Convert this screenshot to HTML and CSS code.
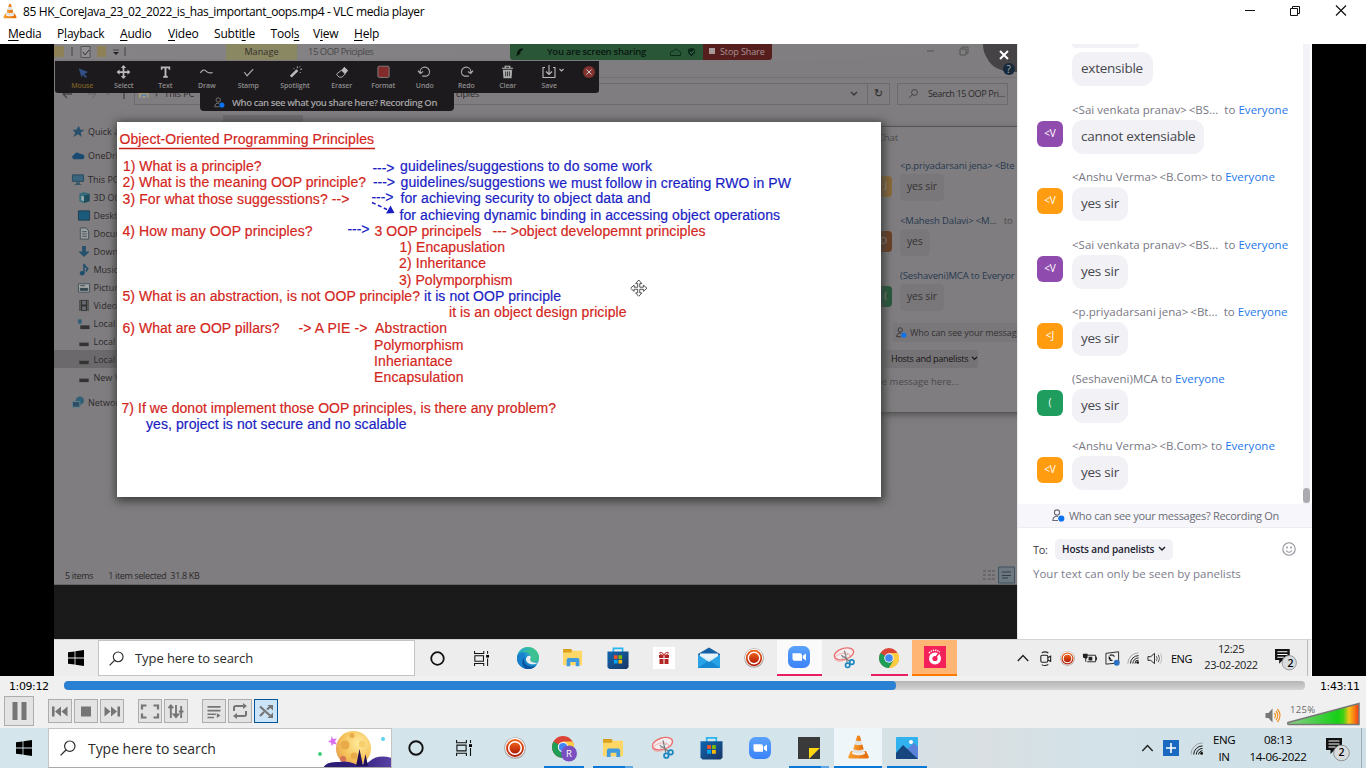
FILE: index.html
```html
<!DOCTYPE html>
<html lang="en">
<head>
<meta charset="utf-8">
<title>VLC media player</title>
<link rel="stylesheet" href="styles.css">
</head>
<body>
<svg class="defs" width="0" height="0" aria-hidden="true">
  <defs>
    <linearGradient id="gEdge" x1="0" y1="1" x2="1" y2="0"><stop offset="0" stop-color="#0b57a8"/><stop offset=".5" stop-color="#1b94d6"/><stop offset="1" stop-color="#5fd05a"/></linearGradient>
    <linearGradient id="gRec" x1="0" y1="0" x2="0" y2="1"><stop offset="0" stop-color="#f06018"/><stop offset="1" stop-color="#b01c08"/></linearGradient>
    <linearGradient id="gStore" x1="0" y1="0" x2="1" y2="1"><stop offset="0" stop-color="#0f66b0"/><stop offset="1" stop-color="#1a3666"/></linearGradient>
    <linearGradient id="gCone" x1="0" y1="0" x2="1" y2="0"><stop offset="0" stop-color="#f9a030"/><stop offset="1" stop-color="#e46a08"/></linearGradient>
    <linearGradient id="gZoom" x1="0" y1="0" x2="0" y2="1"><stop offset="0" stop-color="#5aa2fb"/><stop offset="1" stop-color="#3b82f8"/></linearGradient>
    <linearGradient id="gVol" x1="0" y1="0" x2="1" y2="0"><stop offset="0" stop-color="#8ccf8c"/><stop offset=".7" stop-color="#17cf17"/><stop offset=".78" stop-color="#3fd015"/><stop offset=".86" stop-color="#f5c518"/><stop offset="1" stop-color="#fa3a10"/></linearGradient>
    <radialGradient id="gMoon" cx=".65" cy=".35" r=".8"><stop offset="0" stop-color="#ffeb9c"/><stop offset=".6" stop-color="#f6c35a"/><stop offset="1" stop-color="#e2934a"/></radialGradient>
    <linearGradient id="gHill" x1="0" y1="0" x2="1" y2="0"><stop offset="0" stop-color="#2b1b72"/><stop offset=".5" stop-color="#32207c"/><stop offset="1" stop-color="#5a42a6"/></linearGradient>
  </defs>
  <symbol id="win" viewBox="0 0 16 16"><path d="M0 2.3 6.6 1.4V7.6H0zM7.4 1.3 16 0V7.6H7.4zM0 8.4H6.6V14.6L0 13.7zM7.4 8.4H16V16L7.4 14.7z"/></symbol>
  <symbol id="search" viewBox="0 0 16 16"><circle cx="9.8" cy="6.2" r="5.2" fill="none" stroke="currentColor" stroke-width="1.2"/><path d="M6.2 9.8.6 15.4" stroke="currentColor" stroke-width="1.3"/></symbol>
  <symbol id="cortana" viewBox="0 0 16 16"><circle cx="8" cy="8" r="6.7" fill="none" stroke="#111" stroke-width="1.9"/></symbol>
  <symbol id="task" viewBox="0 0 16 16"><g fill="none" stroke="#111" stroke-width="1.1"><path d="M.6 0v2.7h9.8V0M.6 16v-2.7h9.8V16M.9 5.1h9.2v5.8H.9zM14.5 0v3M14.5 8v8"/></g><rect x="13" y="4.2" width="3" height="2.8"/></symbol>
  <symbol id="edge" viewBox="0 0 22 22"><circle cx="11" cy="11" r="11" fill="url(#gEdge)"/><path d="M.1 9.500C2 6 5.500 5.600 8.500 7.200 5 9.500 5.200 14 7.500 17c2 2.500 5.500 3.800 9 3.500A11 11 0 0 1 .1 9.500z" fill="#177fcb"/><path d="M8.300 9.500C6 12 6.800 16 10 18.300c3 2 7 1.700 10-.8A11 11 0 0 1 9 21.800C4.500 19.500 4 12 8.300 9.500z" fill="#0c54a0"/><path d="M1 7C4 4 12.500 3.500 13.800 9.500c.3 1.500-.6 2.500-.9 3.300.9 2.500 5 2.500 7.600.9 2-1.500 1.700-4.500.5-7C18.500 1.500 12 -1.500 6.500 1.200 4 2.500 2 4.500 1 7z" fill="#3cc292"/><path d="M.8 7.500C3.500 2 10 0 14.500 2.500 10 2 5 3 .8 7.500z" fill="#27a8d6"/><path d="M10.500 9.200c-1.800 1.300-2.200 4-.3 6 2.600 2.700 7.500 2.700 11 .2-2.800.6-6.800.2-8-2.200-.6-1.400 1-1.900.6-3.200-.4-1.300-2-1.800-3.300-.8z" fill="#ededee"/></symbol>
  <symbol id="folder" viewBox="0 0 22 20"><path d="M0 1Q0 0 1 0h8l2 3v3H0z" fill="#d99a12"/><rect y="2" width="21" height="16" rx=".8" fill="#ffd766"/><path d="M0 2h10L9 4H0z" fill="#dba11d"/><path d="M4 19v-7.500l1.500-1.500h11l1.500 1.500V19h-4v-4.500H8V19z" fill="#3e9be0"/></symbol>
  <symbol id="store" viewBox="0 0 24 24"><path d="M7 6V1.500h10V6" fill="none" stroke="#29b6ee" stroke-width="1.800"/><path d="M.5 5h23v17l-2 2h-19l-2-2z" fill="url(#gStore)"/><path fill="#f35325" d="M7.500 9H11.500V13H7.500z"/><path fill="#81bc06" d="M12.500 9H16.500V13H12.500z"/><path fill="#05a6f0" d="M7.500 14H11.500V18H7.500z"/><path fill="#ffba08" d="M12.500 14H16.500V18H12.500z"/></symbol>
  <symbol id="rec" viewBox="0 0 22 22"><circle cx="11" cy="11" r="10.800" fill="#aaa4a0"/><circle cx="11" cy="10.700" r="9.900" fill="#fff"/><circle cx="11" cy="11" r="8" fill="none" stroke="url(#gRec)" stroke-width="1.900"/><circle cx="11" cy="11" r="5.500" fill="url(#gRec)"/></symbol>
  <symbol id="zoom" viewBox="0 0 22 22"><rect width="22" height="22" rx="6.500" fill="url(#gZoom)"/><path d="M4.500 7.200h7.500q2 0 2 2v5.600H6.500q-2 0-2-2zM14.800 9.700l3.200-2.200v7l-3.200-2.200z" fill="#fff"/></symbol>
  <symbol id="snip" viewBox="0 0 24 24"><ellipse cx="12" cy="7.500" rx="10.800" ry="6" transform="rotate(-17 12 7.500)" fill="#f4eef0" stroke="#ee7070" stroke-width="1.500"/><ellipse cx="10" cy="11" rx="8.500" ry="4" transform="rotate(-15 10 11)" fill="none" stroke="#f0a0a0" stroke-width=".8"/><path d="M12.500 4l3 13M9 9l10 7" stroke="#777" stroke-width="1.200"/><path d="M9.500 12.500l7-5" stroke="#aaa"/><circle cx="20.500" cy="16.500" r="2.400" fill="none" stroke="#1c86c0" stroke-width="1.800"/><circle cx="16" cy="20" r="2.400" fill="none" stroke="#1c86c0" stroke-width="1.800"/></symbol>
  <symbol id="chrome" viewBox="0 0 22 22"><circle cx="11" cy="11" r="11" fill="#db4437"/><path d="M11 11 1.500 5.500A11 11 0 0 0 11 22l4.800-8z" fill="#1e9e57"/><path d="M11 22A11 11 0 0 0 20.600 5.500H11l4.800 8.200z" fill="#ffcd40"/><circle cx="11" cy="11" r="5.200" fill="#f4f4f4"/><circle cx="11" cy="11" r="4.100" fill="#4285f4"/></symbol>
  <symbol id="cone" viewBox="0 0 22 24"><path d="M3.500 16h15l2.700 5.500q.5 2-1.200 2H2q-1.700 0-1.200-2z" fill="url(#gCone)"/><path d="M9.600 1q1.400-1 2.800 0l5.100 17.500q-6.500 3.500-13 0z" fill="#e0e0de"/><path d="M9.600 1q1.400-1 2.800 0l1.300 4.400q-2.700 1-5.400 0zM7.200 9.500q3.800 1.600 7.600 0l1.300 4.500q-5.100 2.400-10.200 0z" fill="url(#gCone)"/><path d="M5 16.800q6 3 12 0l.5 1.900q-6.500 3.200-13 0z" fill="#f4ede6"/></symbol>
  <symbol id="wifi" viewBox="0 0 14 14"><g fill="none" stroke="currentColor" stroke-width="1"><path d="M1 13.500A12.500 12.500 0 0 1 13.500 1" stroke="#999"/><path d="M4 13.500A9.500 9.500 0 0 1 13.500 4.200M6.800 13.500a6.700 6.700 0 0 1 6.700-6.600M9.300 13.500a4 4 0 0 1 4.200-4"/></g><circle cx="12.500" cy="12.300" r="1.500"/></symbol>
  <symbol id="note" viewBox="0 0 25 24"><path d="M0 0h16v12H8.500L4.500 16V12H0z" fill="#111"/><path d="M2.500 3h11M2.500 6h11M2.500 9h7" stroke="#fff" stroke-width="1.200"/><circle cx="15.500" cy="15" r="7.800" fill="#d8dcde" stroke="#8e9294"/></symbol>
  <symbol id="up" viewBox="0 0 12 8"><path d="M.8 7 6 1.600 11.200 7" fill="none" stroke="#222" stroke-width="1.400"/></symbol>
  <symbol id="person" viewBox="0 0 13 13"><g fill="none" stroke="currentColor" stroke-width="1.100"><circle cx="5" cy="3.500" r="2.600"/><path d="M6 11.500H.8C1 8 3 7 6 7.400"/></g><circle cx="9.300" cy="9.500" r="3.100" class="badge"/></symbol>
  <symbol id="move" viewBox="0 0 16 16"><path d="M8 0l3 3.500H9V7h3.500V5L16 8l-3.500 3V9H9v3.500h2L8 16l-3-3.500h2V9H3.500v2L0 8l3.500-3v2H7V3.500H5z"/></symbol>
  <symbol id="down" viewBox="0 0 8 6"><path d="M1 1l3 3 3-3" fill="none" stroke="currentColor" stroke-width="1.500"/></symbol>
</svg>

<header class="titlebar">
  <svg class="app-icon"><use href="#cone"/></svg>
  <span class="title">85 HK_CoreJava_23_02_2022_is_has_important_oops.mp4 - VLC media player</span>
  <svg class="win-buttons" viewBox="0 0 104 14"><g fill="none" stroke="#111"><path d="M1 7.500h10M46.500 5.500h7v7h-7zM48.500 5.500v-2h7v7h-2"/><path d="M92 2.500l10 10M102 2.500l-10 10" stroke-width="1.200"/></g></svg>
</header>
<nav class="menubar">
  <span><u>M</u>edia</span><span>P<u>l</u>ayback</span><span><u>A</u>udio</span><span><u>V</u>ideo</span><span>Subti<u>t</u>le</span><span>Tool<u>s</u></span><span>V<u>i</u>ew</span><span><u>H</u>elp</span>
</nav>

<main class="video">
  <div class="frame">
    <section class="share">
      <div class="explorer">
        <div class="ex-title">
          <svg class="quick" viewBox="0 0 76 16"><path d="M0 2h10v11H0zM43 2h9v11h-9z" fill="#8e8057"/><path d="M18 3v9M71 3v9M59 6h6" stroke="#444" stroke-width="1"/><path d="M27 2.500h9v11h-9z" fill="#929092" stroke="#555"/><path d="M29 8l2 3 4-5" fill="none" stroke="#333"/><path d="M59 8h6l-3 3z" fill="#222"/></svg>
          <span class="manage">Manage</span><span class="folder-name">15 OOP Priciples</span>
          <svg class="ex-buttons" viewBox="0 0 88 16"><path d="M-2 7h7M31 5h6v6h-6zM33 5V3h6v6h-2M70 4l8 7M78 4l-8 7" fill="none" stroke="#555"/></svg>
        </div>
        <div class="ribbon"></div>
        <div class="address">
          <svg class="arrows" viewBox="0 0 78 16"><path d="M18 8h-8M13 4L9 8l4 4M70 13V3M66 7l4-4 4 4" fill="none" stroke="#444" stroke-width="1.300"/><path d="M34 8h8M38 4l4 4-4 4M52 7l2 2 2-2" fill="none" stroke="#696769"/></svg>
          <div class="path"><svg class="mini-folder"><use href="#folder"/></svg><span class="pc">&#8250;&nbsp;&nbsp; This PC</span><span class="ciples">ciples</span><svg class="dd"><use href="#down"/></svg><span class="reload">&#8635;</span></div>
          <div class="find"><svg><use href="#search"/></svg><span>Search 15 OOP Pri...</span></div>
        </div>
        <div class="side">
          <div class="item top"><svg viewBox="0 0 14 14"><path d="M8 1l1.500 4L14 5l-4 3 1 5-4-3-5 3 2-5-3-3h4z" fill="#28506b"/></svg>Quick access</div>
          <div class="item top"><svg viewBox="0 0 14 14"><path d="M2 11q-3-3 1-5Q5 2 9 5q5 0 5 4 0 2-3 2z" fill="#194b72"/></svg>OneDrive</div>
          <div class="item top this-pc"><svg viewBox="0 0 14 14"><path d="M1 2h12v7H1z" fill="#39667e" stroke="#28485b"/><path d="M5 10h4v2h2v1H3v-1h2z" fill="#35576a"/></svg>This PC</div>
          <div class="item"><svg viewBox="0 0 14 14"><path d="M2 3l5-2 6 2v8l-6 2-5-2z" fill="#346c7a"/><path d="M7 5l6-2v8l-6 2z" fill="#204d5c"/><path d="M4 5l3 1v5l-3-1z" fill="#93a9ab"/></svg>3D Objects</div>
          <div class="item"><svg viewBox="0 0 14 14"><path d="M1 2h12v10H1z" fill="#195a7d" stroke="#243e50"/></svg>Desktop</div>
          <div class="item"><svg viewBox="0 0 14 14"><path d="M3 1h6l3 3v9H3zM5 5h5M5 7.500h5M5 10h5" fill="#9a9c9d" stroke="#42515a"/></svg>Documents</div>
          <div class="item"><svg viewBox="0 0 14 14"><path d="M5 1h4v6h4l-6 6-6-6h4z" fill="#26516c"/></svg>Downloads</div>
          <div class="item"><svg viewBox="0 0 14 14"><circle cx="5" cy="11" r="2.500" fill="#1e4d6b"/><path d="M7 11V1q1 3 4 5-1 2-2 3" fill="none" stroke="#1e4d6b" stroke-width="1.600"/></svg>Music</div>
          <div class="item"><svg viewBox="0 0 14 14"><path d="M1 3h12v9H1z" fill="#a2a4a5" stroke="#43515a"/><path d="M3 5h5M3 8h8v2H3z" stroke="#33444f" fill="#33444f"/></svg>Pictures</div>
          <div class="item"><svg viewBox="0 0 14 14"><path d="M2 1h10v12H2z" fill="#333"/><path d="M5 2h4v4H5zM5 8h4v4H5z" fill="#686c73"/><path d="M3 2v11M11 2v11" stroke="#999" stroke-dasharray="1 1"/></svg>Videos</div>
          <div class="item"><svg viewBox="0 0 14 14"><path d="M3 9h10v4H3z" fill="#333"/><path d="M1 3h3v3H1zM1 7h3" stroke="#315c78" fill="#315c78"/></svg>Local Disk</div>
          <div class="item"><svg viewBox="0 0 14 14"><path d="M2 8h10v4H2z" fill="#333"/><path d="M3 8h8" stroke="#666"/></svg>Local Disk</div>
          <div class="item selected"><svg viewBox="0 0 14 14"><path d="M2 8h10v4H2z" fill="#333"/><path d="M3 8h8" stroke="#666"/></svg>Local Disk</div>
          <div class="item"><svg viewBox="0 0 14 14"><path d="M2 8h10v4H2z" fill="#333"/><path d="M3 8h8" stroke="#666"/></svg>New Volume</div>
          <div class="item top net"><svg viewBox="0 0 14 14"><circle cx="9" cy="5" r="4.500" fill="#316075"/><path d="M1 6h8v6H1z" fill="#2d4e62" stroke="#617f8c"/></svg>Network</div>
        </div>
        <div class="ex-status"><span>5 items</span><span>1 item selected&nbsp; 31.8 KB</span>
          <svg class="views" viewBox="0 0 34 18"><path d="M1 5h3M1 9h3M1 13h3M6 5h7M6 9h7M6 13h7" stroke="#555" stroke-dasharray="3 1"/><path d="M16.500 1h16v16h-16z" fill="#6d7780" stroke="#3d5260"/><path d="M20 6h9M20 9.500h9M20 12h6" stroke="#303e4a"/></svg>
        </div>
      </div>

      <div class="close-corner"><svg viewBox="0 0 34 31"><path d="M0 0h34v28Q10 28 4 14 0 8 0 0z" fill="#454345"/><circle cx="26" cy="25" r="6" fill="#17293a"/><text x="23.500" y="29" font-size="10" fill="#a3a9b0">?</text><path d="M17 7l8 8M25 7l-8 8" stroke="#fff" stroke-width="2"/></svg></div>

      <div class="selected-tab"></div>
      <aside class="ghost-chat">
        <div class="g-title">Chat</div>
        <div class="g-name">&lt;p.priyadarsani jena&gt; &lt;Bte</div>
        <div class="g-row"><i class="av tan">J</i><b>yes sir</b></div>
        <div class="g-name">&lt;Mahesh Dalavi&gt; &lt;M... <em>to</em></div>
        <div class="g-row"><i class="av brown">D</i><b>yes</b></div>
        <div class="g-name">(Seshaveni)MCA to Everyor</div>
        <div class="g-row"><i class="av dgreen">(</i><b>yes sir</b></div>
        <div class="g-who"><svg><use href="#person"/></svg>Who can see your message</div>
        <div class="g-to"><span>Hosts and panelists <svg><use href="#down"/></svg></span></div>
        <div class="g-type">pe message here...</div>
      </aside>

      <svg class="board" viewBox="117 122 764 374.500">
        <g class="red">
          <text x="119.500" y="143.500" textLength="254.500">Object-Oriented Programming Principles</text>
          <path d="M119 148.500H375" stroke="#c8201c" stroke-width="1.500"/>
          <text x="123" y="171" textLength="138.500">1) What is a principle?</text>
          <text x="122.500" y="187.300" textLength="243.500">2) What is the meaning OOP principle?</text>
          <text x="122.500" y="203.500" textLength="227">3) For what those suggesstions? --&gt;</text>
          <text x="122.500" y="235.500" textLength="190">4) How many OOP principles?</text>
          <text x="374.500" y="235.700" textLength="107">3 OOP principels</text>
          <text x="492.500" y="235.700" textLength="213">--- &gt;object developemnt principles</text>
          <text x="399.500" y="252" textLength="105.500">1) Encapuslation</text>
          <text x="399" y="268.300" textLength="87">2) Inheritance</text>
          <text x="399" y="284.500" textLength="113.500">3) Polymporphism</text>
          <text x="122.500" y="300.800" textLength="297.500">5) What is an abstraction, is not OOP principle?</text>
          <text x="449" y="317" textLength="177.500">it is an object design priciple</text>
          <text x="122.500" y="333" textLength="157">6) What are OOP pillars?</text>
          <text x="298.500" y="333" textLength="69">-&gt; A PIE -&gt;</text>
          <text x="375" y="333" textLength="72">Abstraction</text>
          <text x="374" y="349.500" textLength="89.500">Polymorphism</text>
          <text x="374" y="365.500" textLength="78.500">Inheriantace</text>
          <text x="374" y="381.800" textLength="89.500">Encapsulation</text>
          <text x="121.500" y="412.800" textLength="434.500">7) If we donot implement those OOP principles, is there any problem?</text>
        </g>
        <g class="blue">
          <text x="372.500" y="172.500" textLength="22">---&gt;</text>
          <text x="400" y="171" textLength="252">guidelines/suggestions to do some work</text>
          <text x="373" y="186.500" textLength="22">---&gt;</text>
          <text x="400.500" y="186.800" textLength="144.500">guidelines/suggestions</text>
          <text x="549" y="187.500" textLength="242">we must follow in creating RWO in PW</text>
          <text x="371.500" y="201.500" textLength="22">---&gt;</text>
          <text x="400.500" y="203.300" textLength="250">for achieving security to object data and</text>
          <path d="M372 202.500l15 7" stroke="#1a1ec4" stroke-width="1.500" stroke-dasharray="4 2.500"/><path d="M386 213.500l8.500-.5-4-7.500z" fill="#1a1ec4" stroke="none"/>
          <text x="399.500" y="219.500" textLength="380.500">for achieving dynamic binding in accessing object operations</text>
          <text x="347.500" y="234" textLength="22">---&gt;</text>
          <text x="424" y="300.800" textLength="137">it is not OOP principle</text>
          <text x="146" y="429" textLength="260.500">yes, project is not secure and no scalable</text>
        </g>
        <svg x="630" y="279.500" width="16.500" height="16.500" viewBox="-.5 -.5 17 17" fill="#fff" stroke="#444" stroke-width=".9"><use href="#move"/></svg>
      </svg>

      <div class="sharing"><svg class="pen" viewBox="0 0 8 9"><path d="M8 0Q1 1 1 7l-1 2 3-1q3-2 2-4l2-1z"/></svg><span>You are screen sharing</span><svg class="cloud" viewBox="0 0 26 10"><path d="M1.500 8.500q-1-4 2.500-4.500 3-4 5.500 0 3 0 2 4.500z" fill="none" stroke="#0b2b18"/><path d="M22.500 1l3.500 1v4l-3.500 3.500L19 6V2z" fill="#0b2b18"/><path d="M21 5l1.500 1.500L25 3.500" fill="none" stroke="#4a8160"/></svg></div>
      <div class="stop"><i></i>Stop Share</div>
      <div class="who-bar"><svg><use href="#person"/></svg><span>Who can see what you share here? Recording On</span></div>
      <div class="tools">
        <div class="tool mouse"><svg viewBox="0 0 16 14"><path d="M4 3l10 4-4 2 3 3-2 1-3-3-1 3z" fill="#314f86"/></svg>Mouse</div>
        <div class="tool"><svg viewBox="0 0 16 16"><use href="#move" fill="#bbb"/></svg>Select</div>
        <div class="tool"><svg viewBox="0 0 16 14"><path d="M3 1h10v3.500h-1.500L11 3H9v8l1.500.5V13h-5v-1.500L7 11V3H5l-.5 1.500H3z" fill="#bbb"/></svg>Text</div>
        <div class="tool"><svg viewBox="0 0 16 14"><path d="M1.500 8q3-5 6-2t7 1.500" fill="none" stroke="#aaa" stroke-width="1.300"/></svg>Draw</div>
        <div class="tool"><svg viewBox="0 0 16 14"><path d="M3.500 7l3 4L13 4" fill="none" stroke="#aaa" stroke-width="1.300"/></svg>Stamp</div>
        <div class="tool spot"><svg viewBox="0 0 16 14"><path d="M3 12l7-7" stroke="#bbb" stroke-width="2.800"/><path d="M10 1v2M13 4h2M12.500 7l1 1M6 3l1 1M13 1l-1 1" stroke="#bbb"/></svg>Spotlight</div>
        <div class="tool"><svg viewBox="0 0 16 14"><path d="M3 9l5-4 4 4-3.500 3.500H5.500L3 10z" fill="none" stroke="#bbb"/><path d="M8 5l3-3.500 4 4L12 9z" fill="#bbb"/></svg>Eraser</div>
        <div class="tool"><svg viewBox="0 0 16 14"><rect x="2" y=".8" width="12" height="12" rx="1.500" fill="#812c2b" stroke="#82807f"/></svg>Format</div>
        <div class="tool"><svg viewBox="0 0 16 14"><path d="M5.500 11.500H10A5 5 0 1 0 3.500 8M1 5.500l2.500 3 3-2" fill="none" stroke="#aaa" stroke-width="1.300"/></svg>Undo</div>
        <div class="tool"><svg viewBox="0 0 16 14"><path d="M10.500 11.500H6A5 5 0 1 1 12.500 8M15 5.500l-2.500 3-3-2" fill="none" stroke="#aaa" stroke-width="1.300"/></svg>Redo</div>
        <div class="tool"><svg viewBox="0 0 16 14"><path d="M2 3h12M5.500 3V.8h5V3" fill="none" stroke="#bbb" stroke-width="1.200"/><path d="M3 4.500h10l-.7 9.200H3.700z" fill="#aaa"/><path d="M6 6.500v5M8 6.500v5M10 6.500v5" stroke="#333"/></svg>Clear</div>
        <div class="tool"><svg class="save" viewBox="0 0 24 14"><path d="M8 2.500H6v10h12v-10h-2M12 0v9M9 6.500l3 3 3-3M22.500 4l2 2 2-2" fill="none" stroke="#bbb" stroke-width="1.100"/></svg>Save</div>
        <svg class="tool-close" viewBox="0 0 12 12"><circle cx="6" cy="6" r="6" fill="#823330"/><path d="M3.500 3.500l5 5M8.500 3.500l-5 5" stroke="#ccc"/></svg>
      </div>
    </section>

    <section class="chat">
      <div class="messages">
        <div class="cut"></div>
        <div class="bubble first">extensible</div>
        <div class="msg"><p>&lt;Sai venkata pranav&gt;&thinsp;&lt;BS...&nbsp; to <a>Everyone</a></p><div class="line"><i class="purple">&lt;V</i><div class="bubble">cannot extensiable</div></div></div>
        <div class="msg anshu"><p>&lt;Anshu Verma&gt;&thinsp;&lt;B.Com&gt; to <a>Everyone</a></p><div class="line"><i>&lt;V</i><div class="bubble">yes sir</div></div></div>
        <div class="msg"><p>&lt;Sai venkata pranav&gt;&thinsp;&lt;BS...&nbsp; to <a>Everyone</a></p><div class="line"><i class="purple">&lt;V</i><div class="bubble">yes sir</div></div></div>
        <div class="msg priya"><p>&lt;p.priyadarsani jena&gt;&thinsp;&lt;Bt...&nbsp; to <a>Everyone</a></p><div class="line"><i>&lt;J</i><div class="bubble">yes sir</div></div></div>
        <div class="msg sesha"><p>(Seshaveni)MCA to <a>Everyone</a></p><div class="line"><i class="green">(</i><div class="bubble">yes sir</div></div></div>
        <div class="msg anshu"><p>&lt;Anshu Verma&gt;&thinsp;&lt;B.Com&gt; to <a>Everyone</a></p><div class="line"><i>&lt;V</i><div class="bubble">yes sir</div></div></div>
        <div class="scroll"><div class="thumb"></div></div>
      </div>
      <div class="who"><svg><use href="#person"/></svg><span>Who can see your messages? Recording On</span></div>
      <div class="to"><span class="to-label">To:</span><span class="pill">Hosts and panelists<svg><use href="#down"/></svg></span>
        <svg class="smile" viewBox="0 0 14 14"><g fill="none" stroke="#8e8e98" stroke-width="1.100"><circle cx="7" cy="7" r="6.200"/><path d="M4 8.500q3 3.500 6 0"/></g><circle cx="5" cy="5.500" r=".9" fill="#8e8e98"/><circle cx="9" cy="5.500" r=".9" fill="#8e8e98"/></svg></div>
      <div class="hint">Your text can only be seen by panelists</div>
    </section>
  </div>

  <div class="taskbar inner">
    <div class="start"><svg><use href="#win"/></svg></div>
    <div class="searchbox"><svg><use href="#search"/></svg><span>Type here to search</span></div>
    <div class="slot"><svg class="s15"><use href="#cortana"/></svg></div>
    <div class="slot tv"><svg class="s15"><use href="#task"/></svg></div>
    <div class="slot"><svg class="s22"><use href="#edge"/></svg></div>
    <div class="slot"><svg class="s20"><use href="#folder"/></svg></div>
    <div class="slot"><svg class="s22"><use href="#store"/></svg></div>
    <div class="slot"><svg class="s22" viewBox="0 0 22 22"><path d="M0 0h22v22H0z" fill="#fff"/><path d="M6 8h4.500v3H6zM11.500 8H16v3h-4.500zM6.500 12h4v5h-4zM11.500 12h4v5h-4z" fill="#b02522"/><path d="M11 8Q6 8 7 5.500q2-1 4 2.500 2-3.500 4-2.500Q16 8 11 8z" fill="none" stroke="#c44" stroke-width="1.100"/></svg></div>
    <div class="slot"><svg class="s22" viewBox="0 0 22 22"><path d="M0 7L11 .5 22 7v3H0z" fill="#1660a6"/><path d="M2 6.500h18V12l-9 5-9-5z" fill="#e8f3fa"/><path d="M0 7.500L11 15 22 7.500V21H0z" fill="#28a3e6"/><path d="M0 21l11-8 11 8z" fill="#1688d2"/><path d="M0 7.500L11 15 22 7.500 11 13z" fill="#cfe6f5"/></svg></div>
    <div class="slot"><svg class="s20"><use href="#rec"/></svg></div>
    <div class="slot active"><svg class="s22"><use href="#zoom"/></svg></div>
    <div class="slot"><svg class="s22"><use href="#snip"/></svg></div>
    <div class="slot running"><svg class="s20"><use href="#chrome"/></svg></div>
    <div class="slot orange"><svg class="s22" viewBox="0 0 22 22"><path d="M0 0h22v22H0z" fill="#f5205a"/><circle cx="11" cy="12.500" r="6" fill="#fff"/><circle cx="11" cy="12.500" r="2.600" fill="#f5205a"/><path d="M11 12.500l3.500-5" stroke="#f5205a" stroke-width="1.500"/><path d="M5 7Q10 2 16 6" fill="none" stroke="#fff" stroke-width="1.600" stroke-dasharray="1.300 1"/></svg></div>
    <div class="tray">
      <svg class="up"><use href="#up"/></svg>
      <svg viewBox="0 0 16 16"><g fill="none" stroke="#222" stroke-width="1.200"><rect x="3" y="4.500" width="7.500" height="7.500" rx="1.500"/><path d="M10.500 7l3-1.500v5.500l-3-1.500M4 2q3-2 7 0M4 14.500q3 2 7 0"/></g></svg>
      <svg viewBox="0 0 22 22"><use href="#rec"/></svg>
      <svg viewBox="0 0 16 16"><path d="M5.500 4.500h9v7h-9M14.500 6.500h1v3h-1" fill="none" stroke="#222"/><path d="M7 6h4v4H7zM1 3h5v4l-1.500 1.500v3h-1V8L1 7z" fill="#222"/></svg>
      <svg viewBox="0 0 16 16"><path d="M1 2.500L14.500.8v12L1 14z" fill="none" stroke="#222"/><path d="M5 5q3-2 5 1M5 10h3" fill="none" stroke="#222" stroke-width="1.300"/><path d="M4 5v4h3z"/><circle cx="12.500" cy="12.500" r="3.200" fill="#2b72c4"/></svg>
      <svg class="wf"><use href="#wifi"/></svg>
      <svg viewBox="0 0 16 16"><path d="M1 6h3l4-3.500v11L4 10H1z" fill="none" stroke="#222"/><path d="M10 5.500q1.500 2.500 0 5M12 4q2.500 4 0 8" fill="none" stroke="#555"/><path d="M14 2.500q3.500 5 0 11" fill="none" stroke="#bbb"/></svg>
      <span class="lang">ENG</span>
      <span class="clock">12:25<br>23-02-2022</span>
      <span class="noti"><svg><use href="#note"/></svg><b>2</b></span>
    </div>
  </div>
</main>

<section class="player">
  <div class="seek"><span class="time">1:09:12</span><div class="track"><div class="fill"></div></div><span class="time">1:43:11</span></div>
  <div class="controls">
    <button class="big"><svg viewBox="0 0 16 18"><path d="M1 0h5v18H1zM10 0h5v18h-5z"/></svg></button>
    <div class="group">
      <button><svg viewBox="0 0 16 12"><path d="M0 1h2.500v10H0zM9 1v10L3 6zM15.500 1v10L9.500 6z"/></svg></button>
      <button><svg viewBox="0 0 16 12"><path d="M3 1h10v10H3z"/></svg></button>
      <button><svg viewBox="0 0 16 12"><path d="M13.500 1H16v10h-2.500zM.5 1l6 5-6 5zM7 1l6 5-6 5z"/></svg></button>
    </div>
    <div class="group">
      <button><svg viewBox="0 0 18 14" class="w18"><path d="M1 5V1h4.500M12.500 1H17v4M17 9v4h-4.500M5.500 13H1V9" fill="none" stroke="#757575" stroke-width="2.200"/></svg></button>
      <button><svg viewBox="0 0 18 16" class="w18"><path d="M3.500 2v13M9 1v13M14.500 2v13M1 4.500l2.500-3 2.500 3M6.500 11h5L9 14zM12 8h5" fill="none" stroke="#757575" stroke-width="2"/></svg></button>
    </div>
    <div class="group">
      <button><svg viewBox="0 0 16 14"><path d="M1 2h14M1 6h14M1 10h9M1 13.500h7" stroke="#757575" stroke-width="1.800"/><path d="M11 8.500v5.500l4-2.700z"/></svg></button>
      <button><svg viewBox="0 0 16 16" class="w16"><path d="M2 8V4.500Q2 3 4 3h8M14 8v3.500q0 1.500-2 1.500H4" fill="none" stroke="#757575" stroke-width="2"/><path d="M11 0l4 3-4 3zM5 10l-4 3 4 3z"/></svg></button>
      <button class="on"><svg viewBox="0 0 16 16" class="w16"><path d="M2 3.500l10 9M2 13l4-4M9 6.500l3.500-3" fill="none" stroke="#757575" stroke-width="2.200"/><path d="M9.500 2H15v5.500zM9.500 15H15V9.500z"/></svg></button>
    </div>
    <svg class="volume" viewBox="0 0 98 28">
      <path d="M3.500 12h3l4-4.500v14l-4-4.500h-3z" fill="#777"/><path d="M12.500 12q2 2.500 0 5M14 10q3.500 4.500 0 9M15.500 8q5 6.500 0 13" fill="none" stroke="#f0962a" stroke-width="1.300"/>
      <path d="M26 21.500 97 2.500v21H27q-2 0-1-2z" fill="url(#gVol)" stroke="#777" stroke-width="1.500"/><text x="28" y="11.500" textLength="25">125%</text>
    </svg>
  </div>
</section>

<footer class="taskbar outer">
  <div class="start"><svg><use href="#win"/></svg></div>
  <div class="searchbox"><svg class="mag"><use href="#search"/></svg><span>Type here to search</span>
    <svg class="moon" viewBox="0 0 76 40"><circle cx="37.500" cy="20.500" r="17.500" fill="url(#gMoon)"/><g fill="#e9aa49"><circle cx="29" cy="17" r="4.500"/><circle cx="46" cy="16" r="3.200" fill="#f6ce6b"/><circle cx="36" cy="7.500" r="2.500"/><circle cx="38" cy="28" r="3.500"/><circle cx="27" cy="31" r="3" fill="#d57554"/></g><path d="M15.500 8l1.700 3 3.800-.8-2 3 2 3.300-3.300-.8-2 2.200-.7-3.100-3-1.300 3-1.600z" fill="#da72ef"/><circle cx="4" cy="26" r="1.900" fill="#3ecb77"/><circle cx="67" cy="11" r="2" fill="#5bd5ee"/><path d="M7 40q4-7 16-6 10-2 18 3 7 1 13-4 8-7 22-3v10z" fill="url(#gHill)"/><path d="M43.500 21l3.500 17h-7zM49.500 26l2.500 12h-5z" fill="#211059"/></svg></div>
  <div class="slot"><svg class="s16"><use href="#cortana"/></svg></div>
  <div class="slot"><svg class="s16"><use href="#task"/></svg></div>
  <div class="apps">
    <div class="slot"><svg class="s22"><use href="#rec"/></svg></div>
    <div class="slot running"><svg class="s25" viewBox="0 0 25 25"><use href="#chrome" width="22" height="22"/><circle cx="17" cy="17.500" r="8" fill="#7a4fc0"/><text x="14" y="21" font-size="9.500" fill="#fff">R</text></svg></div>
    <div class="slot running double"><svg class="s21"><use href="#folder"/></svg></div>
    <div class="slot"><svg class="s23"><use href="#snip"/></svg></div>
    <div class="slot"><svg class="s23"><use href="#store"/></svg></div>
    <div class="slot"><svg class="s22"><use href="#zoom"/></svg></div>
    <div class="slot running double"><svg class="s22" viewBox="0 0 22 22"><path d="M0 0h22v11L11 22H0z" fill="#3a3a3a"/><path d="M11 22V11h11z" fill="#ffd80f"/><path d="M11 22L22 11v11z" fill="#3a3a3a"/></svg></div>
    <div class="slot active"><svg class="s23"><use href="#cone"/></svg></div>
    <div class="slot running"><svg class="s22" viewBox="0 0 22 22"><rect width="22" height="22" rx="1" fill="#31b2ee"/><path d="M10 13l8-7 4 4v12H10z" fill="#5a82d8"/><path d="M0 16l7-8 15 14H0z" fill="#16457f"/><circle cx="15" cy="5" r="2" fill="#fff"/></svg></div>
  </div>
  <div class="tray">
    <svg class="up"><use href="#up"/></svg>
    <svg class="plus" viewBox="0 0 16 16"><path d="M0 0h16v16H0z" fill="#1b68c0"/><path d="M8 3v10M3 8h10" stroke="#fff" stroke-width="1.600"/></svg>
    <svg class="wf"><use href="#wifi"/></svg>
    <span class="lang">ENG<br>IN</span>
    <span class="clock">08:13<br>14-06-2022</span>
    <span class="noti"><svg><use href="#note"/></svg><b>2</b></span>
  </div>
</footer>
</body>
</html>
```
FILE: styles.css
```css
* { box-sizing: border-box; }
body { margin: 0; width: 1366px; height: 768px; overflow: hidden; display: flex; flex-direction: column; background: #fff; font-family: "Open Sans", "Noto Sans", sans-serif; font-size: 12px; color: #000; white-space: nowrap; }
svg { display: block; flex: none; overflow: visible; }
.defs { position: absolute; }
i, em, b { font-style: normal; font-weight: normal; }

.titlebar { height: 24px; flex: none; display: flex; align-items: center; padding: 0 18px 2px 3px; }
.app-icon { width: 14px; height: 16px; }
.title { margin-left: 6px; letter-spacing: -0.36px; }
.win-buttons { width: 104px; height: 14px; margin-left: auto; margin-top: -3px; }
.menubar { height: 20px; flex: none; display: grid; grid-template-columns: 49px 63px 48px 46px 56.5px 42.5px 41px 40px; padding-left: 8px; line-height: 19px; letter-spacing: -0.2px; }
.menubar u { text-underline-offset: 2px; }

.video { height: 632px; flex: none; background: #000; padding: 0 54px; display: flex; flex-direction: column; }
.frame { height: 595px; display: flex; }
.share { width: 963px; height: 595px; flex: none; position: relative; overflow: hidden; background: #1a1a1a; }
.explorer { height: 541px; background: #7f7d7f; display: flex; flex-direction: column; color: #2b292b; font-size: 9px; letter-spacing: -0.1px; border-bottom: 1px solid #666; }
.ex-title { height: 15px; flex: none; display: flex; align-items: center; color: #4b494b; background: linear-gradient(90deg, #858385, #7f7d7f); }
.quick { width: 76px; height: 16px; }
.manage { width: 71px; height: 16px; margin-left: 96px; background: #8a8763; text-align: center; line-height: 15px; color: #33312a; letter-spacing: .1px; }
.folder-name { margin-left: 11px; font-size: 9.500px; letter-spacing: -0.500px; }
.ex-buttons { width: 88px; height: 16px; margin-left: auto; }
.ribbon { height: 19px; flex: none; border-bottom: 1px solid #737173; }
.address { height: 31px; flex: none; display: flex; align-items: center; }
.arrows { width: 78px; height: 16px; }
.path { width: 756px; height: 22px; margin-left: 2px; border: 1px solid #6c6a6c; display: flex; align-items: center; padding-left: 4px; }
.mini-folder { width: 10px; height: 10px; opacity: .35; }
.pc { margin-left: 6px; }
.ciples { margin-left: 262px; }
.dd { width: 8px; height: 6px; margin-left: auto; color: #3b393b; }
.reload { width: 22px; margin-left: 9px; border-left: 1px solid #6c6a6c; text-align: center; font-size: 11px; line-height: 20px; font-family: "DejaVu Sans", sans-serif; }
.find { width: 111px; height: 22px; margin-left: 7px; border: 1px solid #6c6a6c; display: flex; align-items: center; padding-left: 11px; letter-spacing: -0.35px; }
.find svg { width: 9px; height: 9px; margin-right: 10px; }
.side { height: 457px; flex: none; padding-top: 10px; }
.item { height: 18.050px; width: 120px; display: flex; align-items: center; padding-left: 23px; gap: 2.500px; overflow: hidden; letter-spacing: 0; }
.item svg { width: 14px; height: 13px; }
.item.top { padding-left: 17px; height: 24px; gap: 3px; }
.item.this-pc { height: 18px; margin-top: 3px; }
.item.selected { background: #6b696b; }
.item.net { height: 31px; }
.ex-status { height: 18px; display: flex; align-items: center; padding: 0 1px 0 11px; gap: 15px; letter-spacing: -0.35px; }
.views { width: 34px; height: 18px; margin-left: auto; }

.selected-tab { position: absolute; left: 169px; top: 71px; width: 80px; height: 8px; background: #6e6c6e; }
.close-corner { position: absolute; right: 0; top: 0; width: 34px; height: 31px; }
.ghost-chat { position: absolute; left: 810px; top: 82px; width: 160px; height: 287px; background: #7f7d7f; border-top: 1px solid #555; border-bottom: 1px solid #555; box-shadow: 0 2px 6px #555; font-size: 9.500px; color: #353335; letter-spacing: -0.15px; }
.g-title { padding: 4px 0 0 14px; height: 30.500px; color: #4b494b; }
.g-name { height: 15px; padding-left: 36px; line-height: 15px; color: #27394f; }
.g-name em { color: #4b494b; margin-left: 5px; }
.g-row { height: 40px; display: flex; padding-top: 1px; align-items: flex-start; }
.g-row b { height: 27px; margin-left: 8px; padding: 0 7px; line-height: 25px; background: #797779; border-radius: 5px; font-size: 10.500px; }
.av { width: 28px; height: 21px; margin-top: 2px; border-radius: 4px; color: #9e9a94; text-align: right; padding-right: 5px; line-height: 20px; }
.tan { background: #8a6937; } .brown { background: #6b3f23; } .dgreen { background: #245a3b; }
.g-who { height: 19px; display: flex; align-items: center; margin-left: 29px; padding-left: 3px; gap: 3px; background: #797779; font-size: 9px; letter-spacing: -0.1px; }
.g-who svg { width: 11px; height: 11px; }
.g-who .badge { fill: #1a2c45; }
.g-to { height: 32px; padding: 8px 0 0 20px; }
.g-to span { display: flex; align-items: center; gap: 3px; height: 18px; width: 94px; padding-left: 7px; background: #757375; border-radius: 3px; color: #171517; font-size: 9px; letter-spacing: -0.25px; }
.g-to svg { width: 7px; height: 5px; }
.g-type { padding-left: 12px; line-height: 15px; color: #4b494b; letter-spacing: 0; }

.board { position: absolute; left: 63px; top: 78px; width: 764px; height: 374.500px; background: #fff; box-shadow: 1px 2px 9px 2px #3d3d3d; font-family: "Liberation Sans", Arial, sans-serif; font-size: 14px; }
.red { fill: #d3261c; stroke: #d3261c; stroke-width: .2px; }
.blue { fill: #1a1ec4; stroke: #1a1ec4; stroke-width: .2px; }

.sharing { position: absolute; left: 456px; top: 0; width: 193px; height: 16px; background: #2a5638; border-radius: 0 0 0 3px; color: #08170e; display: flex; align-items: center; padding-left: 6px; font-size: 9.500px; line-height: 14px; padding-bottom: 1px; }
.sharing span { margin-left: 24px; letter-spacing: -0.25px; width: 96px; font-weight: 600; }
.pen { width: 7px; height: 8px; fill: #08170e; }
.cloud { width: 26px; height: 10px; margin-left: 26px; }
.stop { position: absolute; left: 649px; top: 0; width: 69px; height: 16px; background: #571e1e; border-radius: 0 0 3px 0; color: #a79595; display: flex; align-items: center; gap: 5px; padding-left: 6px; padding-bottom: 2px; font-size: 9px; letter-spacing: -0.1px; }
.stop i { width: 6px; height: 6px; background: #a99a9a; }
.who-bar { position: absolute; left: 146px; top: 46px; width: 254px; height: 21px; background: #1c1a1c; border-radius: 0 0 4px 4px; display: flex; align-items: center; padding: 3px 0 0 14px; color: #a6a4a6; font-size: 9.500px; font-weight: 600; letter-spacing: -0.4px; }
.who-bar svg { width: 11px; height: 11px; margin-right: 7px; color: #777577; }
.badge { fill: #0e72ed; }
.tools { position: absolute; left: 1px; top: 17px; width: 544px; height: 32px; background: #1c1a1c; border-radius: 0 0 3px 3px; display: flex; padding: 4px 0 0 6.500px; }
.tool { width: 41.500px; display: flex; flex-direction: column; align-items: center; color: #8e8c8e; font-size: 7px; font-weight: 600; line-height: 9px; gap: 2px; letter-spacing: -0.1px; }
.tool.spot { width: 52px; }
.tool svg { width: 15px; height: 14px; }
.tool svg.save { width: 24px; }
.tool.mouse { color: #7b6028; }
.tool-close { width: 12px; height: 12px; margin: 1px 0 0 13px; }

.chat { width: 295px; flex: none; background: #fff; border-left: 1px solid #e8e8ea; color: #777783; display: flex; flex-direction: column; }
.messages { height: 460px; flex: none; position: relative; }
.scroll { position: absolute; right: 2px; top: 0; width: 7px; height: 460px; background: #f3f3f7; padding-top: 444px; }
.thumb { width: 7px; height: 15px; border-radius: 3.500px; background: #aaaab0; }
.cut { width: 67px; height: 4px; margin-left: 54px; background: #f1f1f6; border-radius: 0 0 11px 11px; }
.bubble { display: inline-block; height: 34px; padding: 0 9px; border-radius: 11px; background: #f1f1f6; color: #47474d; font-size: 13.500px; letter-spacing: -0.25px; line-height: 32px; }
.bubble.first { display: block; width: 81px; margin: 4px 0 15px 54px; }
.msg { height: 67.250px; }
.msg p { margin: 0 0 0 54px; height: 19px; line-height: 17px; font-size: 11.500px; letter-spacing: .03px; }
.msg a { color: #1e78ea; }
.line { display: flex; padding-left: 19px; gap: 9px; }
.line i { width: 26px; height: 26px; margin-top: 1px; border-radius: 6px; background: #ff9c10; color: #fff; text-align: center; font-size: 10px; line-height: 24px; }
.line i.purple { background: #8f4bae; }
.line i.green { background: #1f9d5e; }
.who { height: 24px; flex: none; background: #f7f7fb; border-bottom: 1px solid #eee; display: flex; align-items: center; padding: 0 0 1px 34px; color: #6b6b76; font-size: 11px; letter-spacing: -0.3px; }
.who svg { width: 13px; height: 13px; margin-right: 4px; }
.to { height: 42px; flex: none; display: flex; align-items: center; padding: 0 16px 0 15px; color: #3b3b42; font-size: 11px; }
.to-label { width: 22px; letter-spacing: -0.4px; }
.pill { width: 118px; height: 21px; background: #f1f1f6; border-radius: 5px; padding-left: 7px; display: flex; align-items: center; gap: 4px; color: #222230; font-size: 10px; font-weight: 600; letter-spacing: -0.1px; }
.pill svg { width: 8px; height: 6px; }
.smile { width: 14px; height: 14px; margin-left: auto; }
.hint { padding-left: 15px; margin-top: -5px; color: #7c7c8c; font-size: 11.500px; line-height: 18px; }

.taskbar { display: flex; align-items: stretch; }
.start { display: flex; align-items: center; justify-content: center; }
.start svg { width: 16px; height: 16px; }
.searchbox { background: #fff; border: 1px solid #c4c4c4; display: flex; align-items: center; color: #2b2b2b; }
.slot { display: flex; align-items: center; justify-content: center; flex: none; position: relative; }
.tray { margin-left: auto; display: flex; align-items: center; }
.s15 { width: 15px; height: 15px; } .s16 { width: 16px; height: 16px; } .s20 { width: 20px; height: 20px; } .s21 { width: 21px; height: 21px; }
.s22 { width: 22px; height: 22px; } .s23 { width: 23px; height: 24px; } .s25 { width: 25px; height: 25px; }
.clock { text-align: center; }
.noti { position: relative; }
.noti svg { width: 25px; height: 24px; }
.noti b { position: absolute; left: 8px; top: 7px; width: 15px; text-align: center; font-size: 10.500px; line-height: 15px; font-weight: 600; }

.inner { height: 37px; flex: none; background: #ededee; border-top: 1px solid #d4d4d4; padding-right: 3px; border-right: 1px solid #fff; }
.inner .start { width: 44px; }
.inner .searchbox { width: 317px; padding-left: 10px; }
.inner .searchbox svg { width: 15px; height: 15px; margin-right: 11px; }
.inner .searchbox span { font-size: 13px; letter-spacing: -0.08px; }
.inner .slot { width: 45.200px; }
.inner .tv { padding-right: 3px; }
.inner .active { background: #fafafa; border-bottom: 2px solid #e71f60; }
.inner .running::after { content: ""; position: absolute; bottom: 0; left: 4px; width: 37px; height: 2px; background: #e71f60; }
.inner .orange { background: #ffb674; border-bottom: 2px solid #ff7a00; }
.inner .tray { border-right: 1px solid #bbb; padding-right: 9px; }
.inner .tray > svg { width: 15px; height: 15px; margin-right: 7.200px; }
.inner .tray > .up { width: 12px; height: 8px; margin-right: 9px; }
.inner .tray > .wf { width: 12px; height: 12px; margin-right: 8.500px; }
.inner .lang { width: 31px; margin-left: 1.500px; font-size: 11px; letter-spacing: -0.5px; }
.inner .clock { width: 58px; padding-bottom: 2px; font-size: 11px; line-height: 16.500px; letter-spacing: -0.4px; color: #222; }
.inner .noti { margin-left: 15px; margin-top: 4px; }
.inner .noti svg { width: 23px; height: 22px; }

.player { height: 52px; flex: none; background: #f0f0f0; }
.seek { height: 19px; display: flex; align-items: center; font: 11px "DejaVu Sans", sans-serif; padding: 1px 0 0 9px; letter-spacing: -0.4px; }
.time:first-child { width: 55px; }
.track { width: 1241px; height: 9px; flex: none; margin-right: 15px; margin-top: -2px; border-radius: 4px; background: linear-gradient(#b6b6b6, #d4d4d4); overflow: hidden; }
.fill { width: 832px; height: 9px; border-radius: 4px; background: #2a80d2; }
.controls { height: 33px; display: flex; align-items: center; padding: 0 6px 1px 4px; }
button { width: 24px; height: 24px; padding: 0; border: 1px solid #adadad; background: #e3e3e3; display: flex; align-items: center; justify-content: center; fill: #757575; }
button svg { width: 16px; height: 13px; }
button .w16 { width: 16px; height: 16px; }
button .w18 { width: 18px; height: 15px; }
button.big { width: 30px; height: 30px; }
button.big svg { width: 17px; height: 18px; }
button.on { background: #cce4f7; border-color: #005499; }
.group { display: flex; gap: 2px; margin-left: 14px; }
.volume { width: 98px; height: 28px; margin: 7px 0 0 auto; font-size: 9.500px; fill: #6b6b6b; }

.outer { height: 40px; flex: none; background: linear-gradient(90deg, #d5e5ec, #d3e4ea 58%, #d9dfe2 72%, #d2e2e8 80%, #cfdfe7); padding-right: 4px; }
.outer .start { width: 48px; }
.outer .searchbox { width: 344px; padding-left: 11px; overflow: hidden; border-bottom-color: #aaa; }
.outer .mag { width: 16px; height: 16px; margin-right: 12px; }
.outer .searchbox span { font-size: 14px; letter-spacing: -0.05px; }
.moon { width: 76px; height: 40px; margin: 0 -1px 0 auto; }
.outer .slot { width: 48px; }
.apps { display: flex; gap: 1px; margin-left: 3px; }
.outer .running::after { content: ""; position: absolute; bottom: 0; left: 4px; width: 40px; height: 2px; background: #0a78d4; }
.outer .double::after { background: linear-gradient(90deg, #0a78d4 80%, #5ba8e4 80%); }
.outer .active { background: #eff6fa; border-bottom: 2px solid #0a78d4; }
.outer .tray { border-right: 1px solid #9eabb0; padding-right: 10px; }
.outer .tray > .up { width: 13px; height: 8px; margin-right: 9px; }
.plus { width: 16px; height: 16px; margin-right: 11px; }
.outer .wf { width: 13px; height: 13px; margin-right: 9px; }
.outer .lang { width: 24px; text-align: center; font-size: 11.500px; line-height: 17px; letter-spacing: -0.4px; }
.outer .clock { width: 60px; margin-left: 12px; font-size: 11.500px; line-height: 17px; letter-spacing: -0.3px; }
.outer .lang, .outer .clock { padding-bottom: 1px; }
.outer .noti { margin-left: 18px; margin-top: 4px; }
```
